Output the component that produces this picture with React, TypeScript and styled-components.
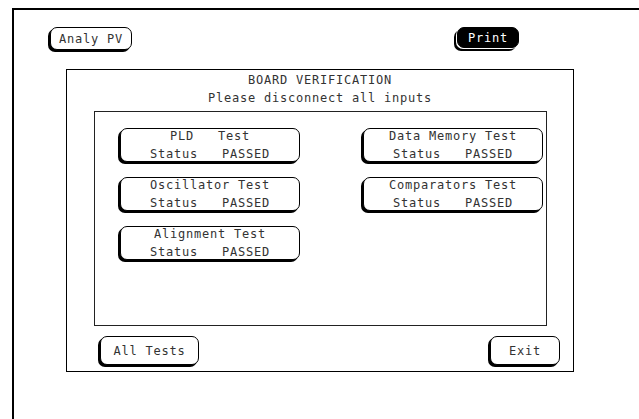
import React from "react";
import styled, { createGlobalStyle } from "styled-components";

const FONT = `"DejaVu Sans Mono", "Liberation Mono", monospace`;

const Global = createGlobalStyle`
  html, body { margin: 0; padding: 0; background: #fff; }
  body { font-family: ${FONT}; color: #333; }
`;

const Frame = styled.div`
  margin: 8px 0 0 12px;
  height: 411px;
  box-sizing: border-box;
  border-top: 2px solid #000;
  border-left: 2px solid #000;
`;

const TopBar = styled.div`
  display: flex;
  align-items: flex-start;
  padding: 17px 0 0 36px;
  height: 23px;
`;

const Key = styled.button<{ $w: number; $h: number; $dark?: boolean; $ml?: number }>`
  box-sizing: border-box;
  width: ${(p) => p.$w}px;
  height: ${(p) => p.$h}px;
  margin: 0 0 0 ${(p) => p.$ml ?? 0}px;
  padding: 0;
  border: 1px solid #000;
  border-radius: 7px;
  background: ${(p) => (p.$dark ? "#000" : "#fff")};
  color: ${(p) => (p.$dark ? "#fff" : "#333")};
  box-shadow: ${(p) =>
    p.$dark ? "-1px 1px 0 0 #fff, -3px 3px 0 0 #000" : "-2px 2px 0 0 #000"};
  font-family: ${FONT};
  font-weight: 400;
  font-size: 12px;
  letter-spacing: 0.78px;
  line-height: 18px;
  white-space: pre;
  display: flex;
  flex-direction: column;
  align-items: center;
  justify-content: center;
  cursor: pointer;
`;

const Panel = styled.div`
  box-sizing: border-box;
  margin: 19px 0 0 52px;
  width: 508px;
  height: 303px;
  border: 1px solid #000;
  display: flex;
  flex-direction: column;
`;

const Header = styled.div`
  padding-top: 1px;
  text-align: center;
  font-size: 12px;
  letter-spacing: 0.78px;
  line-height: 18px;
  white-space: pre;
`;

const Inner = styled.div`
  box-sizing: border-box;
  margin: 4px 0 0 27px;
  width: 453px;
  height: 215px;
  border: 1px solid #222;
  display: grid;
  grid-template-columns: 180px 180px;
  grid-auto-rows: 34px;
  column-gap: 63px;
  row-gap: 15px;
  padding: 16px 0 0 25px;
  align-content: start;
`;

const Empty = styled.div``;

const BottomBar = styled.div`
  display: flex;
  justify-content: space-between;
  padding: 10px 13px 0 33px;
`;

const Line = styled.span`
  display: block;
`;

const tests = [
  ["PLD   Test", "Data Memory Test"],
  ["Oscillator Test", "Comparators Test"],
  ["Alignment Test", null],
];

const TestKey = ({ name }: { name: string }) => (
  <Key $w={180} $h={34}>
    <Line>{name}</Line>
    <Line>Status   PASSED</Line>
  </Key>
);

export default function App() {
  return (
    <>
      <Global />
      <Frame>
        <TopBar>
          <Key $w={82} $h={23}>Analy PV</Key>
          <Key $w={62} $h={21} $dark $ml={325}>Print</Key>
        </TopBar>
        <Panel>
          <Header>
            <Line>BOARD VERIFICATION</Line>
            <Line>Please disconnect all inputs</Line>
          </Header>
          <Inner>
            {tests.flatMap((row, i) =>
              row.map((name, j) =>
                name ? <TestKey key={`${i}-${j}`} name={name} /> : <Empty key={`${i}-${j}`} />
              )
            )}
          </Inner>
          <BottomBar>
            <Key $w={99} $h={29}>All Tests</Key>
            <Key $w={70} $h={29}>Exit</Key>
          </BottomBar>
        </Panel>
      </Frame>
    </>
  );
}
